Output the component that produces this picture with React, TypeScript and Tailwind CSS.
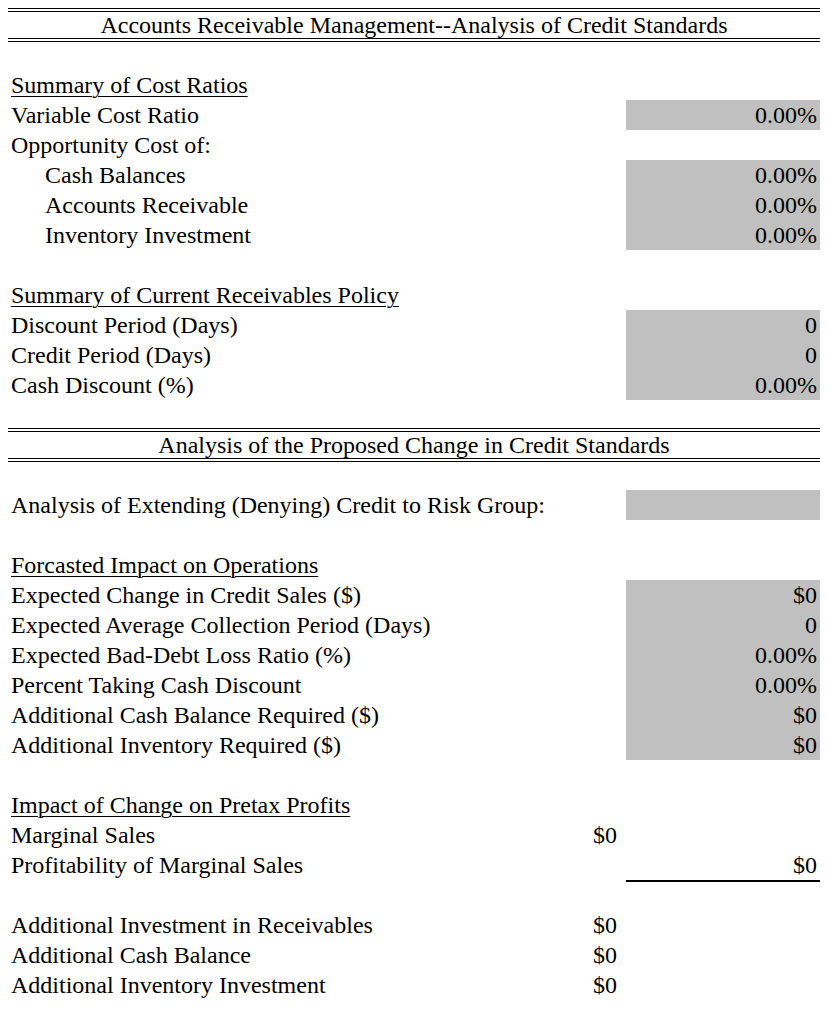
import React from "react";

type RowProps = {
  label?: string;
  indent?: boolean;
  heading?: boolean;
  mid?: string;
  value?: string;
  gray?: boolean;
  rule?: boolean;
};

function Row({ label, indent, heading, mid, value, gray, rule }: RowProps) {
  return (
    <div className="flex h-[30px] items-stretch leading-[30px]">
      <div className={`min-w-0 flex-1 whitespace-nowrap ${indent ? "pl-[45px]" : "pl-[11px]"}`}>
        {heading ? <span className="underline decoration-1 underline-offset-[3px]">{label}</span> : label}
      </div>
      <div className="w-[130px] shrink-0 pr-[9px] text-right">{mid}</div>
      <div
        className={`box-border w-[194px] shrink-0 pr-[3px] text-right ${gray ? "bg-[#c0c0c0]" : ""} ${
          rule ? "h-[32px] border-b-2 border-black" : ""
        }`}
      >
        {value}
      </div>
    </div>
  );
}

function Title({ children }: { children: string }) {
  return (
    <div className="box-border h-[34px] border-y-4 border-double border-black text-center leading-[26px]">
      {children}
    </div>
  );
}

function Gap() {
  return <div className="h-[30px]" />;
}

export default function App() {
  return (
    <div
      className="min-h-[1020px] w-[828px] bg-white pt-[8px] text-[24px] text-black"
      style={{ fontFamily: '"Liberation Serif", "Times New Roman", serif' }}
    >
      <div className="px-[8px]">
        <Title>Accounts Receivable Management--Analysis of Credit Standards</Title>
        <div className="h-[28px]" />
        <div className="-mx-[8px] pr-[8px]">
          <Row heading label="Summary of Cost Ratios" />
          <Row label="Variable Cost Ratio" value="0.00%" gray />
          <Row label="Opportunity Cost of:" />
          <Row indent label="Cash Balances" value="0.00%" gray />
          <Row indent label="Accounts Receivable" value="0.00%" gray />
          <Row indent label="Inventory Investment" value="0.00%" gray />
          <Gap />
          <Row heading label="Summary of Current Receivables Policy" />
          <Row label="Discount Period (Days)" value="0" gray />
          <Row label="Credit Period (Days)" value="0" gray />
          <Row label="Cash Discount (%)" value="0.00%" gray />
        </div>
        <div className="h-[28px]" />
        <Title>Analysis of the Proposed Change in Credit Standards</Title>
        <div className="h-[28px]" />
        <div className="-mx-[8px] pr-[8px]">
          <Row label="Analysis of Extending (Denying) Credit to Risk Group:" gray />
          <Gap />
          <Row heading label="Forcasted Impact on Operations" />
          <Row label="Expected Change in Credit Sales ($)" value="$0" gray />
          <Row label="Expected Average Collection Period (Days)" value="0" gray />
          <Row label="Expected Bad-Debt Loss Ratio (%)" value="0.00%" gray />
          <Row label="Percent Taking Cash Discount" value="0.00%" gray />
          <Row label="Additional Cash Balance Required ($)" value="$0" gray />
          <Row label="Additional Inventory Required ($)" value="$0" gray />
          <Gap />
          <Row heading label="Impact of Change on Pretax Profits" />
          <Row label="Marginal Sales" mid="$0" />
          <Row label="Profitability of Marginal Sales" value="$0" rule />
          <Gap />
          <Row label="Additional Investment in Receivables" mid="$0" />
          <Row label="Additional Cash Balance" mid="$0" />
          <Row label="Additional Inventory Investment" mid="$0" />
        </div>
      </div>
    </div>
  );
}
